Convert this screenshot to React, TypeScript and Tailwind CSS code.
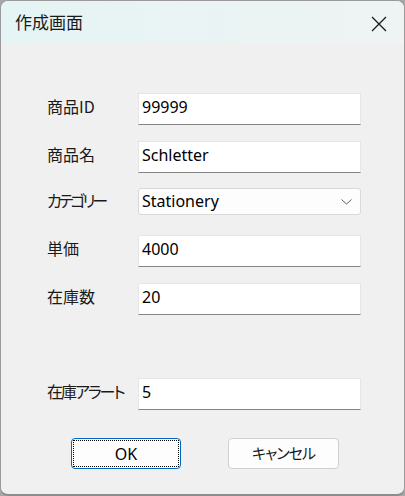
import React from 'react';

const jp = "font-['Noto_Sans_CJK_JP','Noto_Sans',sans-serif] [font-feature-settings:'palt']";
const latin = "font-['Noto_Sans','Noto_Sans_CJK_JP',sans-serif]";

interface FieldRowProps {
  label: string;
  value: string;
  className?: string;
  labelClass?: string;
}

function FieldRow({ label, value, className = '', labelClass = '' }: FieldRowProps) {
  return (
    <div className={`flex items-start ${className}`}>
      <div className={`w-[91px] pt-[1px] text-[16px] leading-[24px] text-[#1a1a1a] whitespace-nowrap ${jp} ${labelClass}`}>
        {label}
      </div>
      <div
        className={`w-[223px] h-[32px] bg-white border border-[#e6e6e6] border-b-[#858585] px-[3px] pt-[3px] text-[16px] leading-[20px] text-black ${latin}`}
      >
        {value}
      </div>
    </div>
  );
}

function SelectRow({ label, value }: { label: string; value: string }) {
  return (
    <div className="flex items-start mt-[15px]">
      <div className={`w-[91px] text-[16px] leading-[24px] text-[#1a1a1a] whitespace-nowrap tracking-[-3px] ${jp}`}>
        {label}
      </div>
      <div
        className={`w-[223px] h-[27px] bg-[#fdfdfd] border border-[#d9d9d9] rounded-[3px] pl-[3px] pr-[8px] pt-[2px] flex items-start justify-between text-[16px] leading-[20px] text-black ${latin}`}
      >
        <span>{value}</span>
        <svg width="11" height="6" viewBox="0 0 11 6" className="mt-[8px]">
          <path d="M0.5 0.5 L5.5 5 L10.5 0.5" fill="none" stroke="#5f5f5f" strokeWidth="1" />
        </svg>
      </div>
    </div>
  );
}

export default function App() {
  return (
    <div className="w-[405px] h-[496px] bg-[#a8a8a8]">
      <div className="w-[405px] h-[496px] flex flex-col border border-[#9a9a9a] border-b-2 border-b-[#8d8d8d] rounded-[8px] overflow-hidden bg-[#f0f0f0]">
        {/* title bar */}
        <div className="h-[43px] shrink-0 flex items-start justify-between bg-gradient-to-r from-[#e5f4f4] to-[#eff3f3]">
          <div className={`ml-[14px] mt-[9px] text-[17px] leading-[24px] text-[#1a1a1a] ${jp}`}>作成画面</div>
          <svg width="16" height="16" viewBox="0 0 16 16" className="mr-[17px] mt-[15px]">
            <path d="M1 1 L15 15 M15 1 L1 15" stroke="#1a1a1a" strokeWidth="1.3" fill="none" />
          </svg>
        </div>

        {/* form */}
        <div className="flex flex-col pl-[46px]">
          <FieldRow label="商品ID" value="99999" className="mt-[49px]" />
          <FieldRow label="商品名" value="Schletter" className="mt-[16px]" />
          <SelectRow label="カテゴリー" value="Stationery" />
          <FieldRow label="単価" value="4000" className="mt-[20px]" />
          <FieldRow label="在庫数" value="20" className="mt-[16px]" />
          <FieldRow label="在庫アラート" value="5" className="mt-[63px]" labelClass="tracking-[-2px]" />
        </div>

        {/* buttons */}
        <div className="flex mt-[28px] pl-[70px] gap-[47px]">
          <div className="w-[110px] h-[31px] rounded-[4px] border border-[#0067c0] bg-[#fdfdfd] p-[1px]">
            <div className={`w-full h-full border border-dotted border-black flex items-center justify-center text-[16px] text-black ${latin}`}>
              OK
            </div>
          </div>
          <div
            className={`w-[111px] h-[31px] rounded-[4px] border border-[#d0d0d0] bg-[#fdfdfd] flex items-center justify-center text-[15px] tracking-[-1px] text-[#1a1a1a] ${jp}`}
          >
            キャンセル
          </div>
        </div>
      </div>
    </div>
  );
}
